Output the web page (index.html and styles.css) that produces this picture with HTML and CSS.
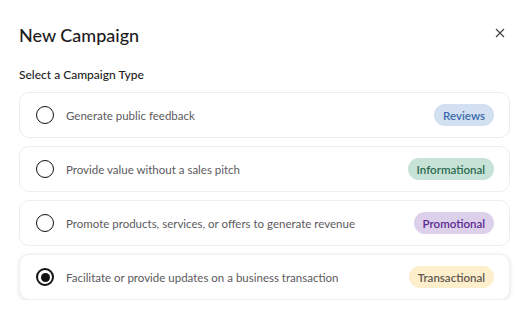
FILE: index.html
```html
<!DOCTYPE html>
<html>
<head>
<meta charset="utf-8">
<link rel="stylesheet" href="styles.css">
</head>
<body>
<div class="modal">
  <div class="header">
    <h1 class="title">New Campaign</h1>
    <button class="close" aria-label="Close">
      <svg width="10" height="10" viewBox="0 0 10 10"><path d="M1 1L9 9M9 1L1 9" stroke="#444" stroke-width="1.2" fill="none"/></svg>
    </button>
  </div>
  <div class="label">Select a Campaign Type</div>
  <div class="list">
    <label class="card">
      <span class="radio"></span>
      <span class="text">Generate public feedback</span>
      <span class="badge reviews">Reviews</span>
    </label>
    <label class="card">
      <span class="radio"></span>
      <span class="text">Provide value without a sales pitch</span>
      <span class="badge info">Informational</span>
    </label>
    <label class="card">
      <span class="radio"></span>
      <span class="text">Promote products, services, or offers to generate revenue</span>
      <span class="badge promo">Promotional</span>
    </label>
    <label class="card selected">
      <span class="radio checked"></span>
      <span class="text">Facilitate or provide updates on a business transaction</span>
      <span class="badge trans">Transactional</span>
    </label>
  </div>
</div>
</body>
</html>
```
FILE: styles.css
```css
* { box-sizing: border-box; }
html, body { margin: 0; background: #fff; }
body { font-family: Lato, "Open Sans", sans-serif; color: #1f1f1f; }
.modal { width: 526px; padding: 21px 16px 0 19px; }
.header { display: flex; align-items: center; justify-content: space-between; height: 28px; }
.title { margin: 0; font-size: 18px; font-weight: 500; color: #1d1c1d; }
.close { border: none; background: none; padding: 0; width: 12px; height: 12px; display: flex; align-items: center; justify-content: center; margin-right: 4px; margin-top: -4px; cursor: pointer; }
.label { margin-top: 18px; font-size: 12px; font-weight: 500; color: #1d1c1d; }
.list { margin-top: 10px; display: flex; flex-direction: column; gap: 8px; width: 491px; }
.card { display: flex; align-items: center; height: 46px; padding: 0 15px 0 16px; border: 1px solid #ecebf0; border-radius: 10px; background: #fff; }
.card.selected { border-color: #f0eff3; box-shadow: 0 1px 4px rgba(0,0,0,0.12); }
.radio { width: 18px; height: 18px; border: 1.5px solid #111; border-radius: 50%; flex: none; display: flex; align-items: center; justify-content: center; }
.radio.checked { border-width: 2px; }
.radio.checked::after { content: ""; width: 9px; height: 9px; border-radius: 50%; background: #111; }
.text { margin-left: 12px; flex: 1; font-size: 11.5px; color: #5c5a60; }
.badge { height: 22px; border-radius: 11px; padding: 0 9px; display: flex; align-items: center; font-size: 11.5px; font-weight: 600; }
.reviews { background: #d2e0f1; color: #3b6aa9; }
.info { background: #c7e2d6; color: #2b6a4f; }
.promo { background: #ddd0ea; color: #5b2a93; }
.trans { background: #fdeecc; color: #5e5850; }
```
